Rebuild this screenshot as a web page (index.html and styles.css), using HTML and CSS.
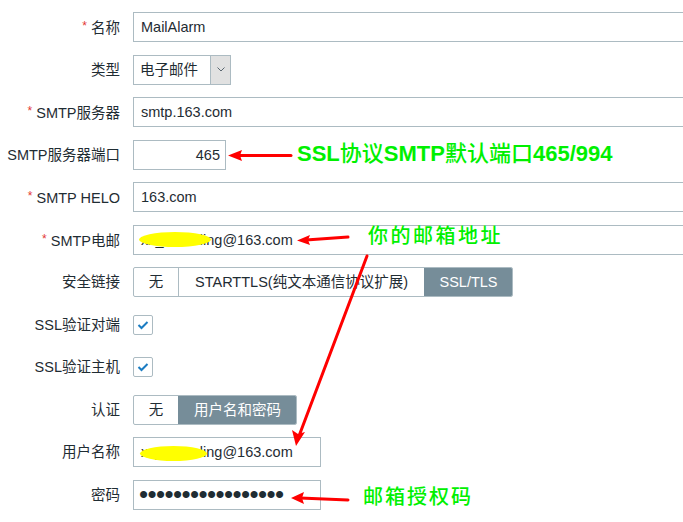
FILE: index.html
```html
<!DOCTYPE html>
<html lang="zh-CN">
<head>
<meta charset="utf-8">
<title>MailAlarm</title>
<link rel="stylesheet" href="styles.css">
</head>
<body>
<div class="page">
  <div class="form">
    <div class="row">
      <div class="label"><span class="req">*</span>名称</div>
      <div class="input wide">MailAlarm</div>
    </div>
    <div class="row">
      <div class="label">类型</div>
      <div class="select">
        <span class="select-text">电子邮件</span>
        <span class="select-btn">
          <svg width="8" height="5" viewBox="0 0 8 5"><path d="M0.5 0.5 L4 4 L7.5 0.5" fill="none" stroke="#5a6670" stroke-width="1"/></svg>
        </span>
      </div>
    </div>
    <div class="row">
      <div class="label"><span class="req">*</span>SMTP服务器</div>
      <div class="input wide">smtp.163.com</div>
    </div>
    <div class="row">
      <div class="label">SMTP服务器端口</div>
      <div class="input port">465</div>
    </div>
    <div class="row">
      <div class="label"><span class="req">*</span>SMTP HELO</div>
      <div class="input wide">163.com</div>
    </div>
    <div class="row">
      <div class="label"><span class="req">*</span>SMTP电邮</div>
      <div class="input wide masked">xx_xxxxxling@163.com<span class="blob blob-email"></span></div>
    </div>
    <div class="row">
      <div class="label">安全链接</div>
      <div class="seg">
        <span class="seg-item s-none">无</span>
        <span class="seg-item s-starttls">STARTTLS(纯文本通信协议扩展)</span>
        <span class="seg-item s-ssl on">SSL/TLS</span>
      </div>
    </div>
    <div class="row">
      <div class="label">SSL验证对端</div>
      <div class="check"><svg width="18" height="18" viewBox="0 0 18 18"><path d="M4.5 9 L7.5 12 L13.5 6" fill="none" stroke="#1b7cc2" stroke-width="2"/></svg></div>
    </div>
    <div class="row">
      <div class="label">SSL验证主机</div>
      <div class="check"><svg width="18" height="18" viewBox="0 0 18 18"><path d="M4.5 9 L7.5 12 L13.5 6" fill="none" stroke="#1b7cc2" stroke-width="2"/></svg></div>
    </div>
    <div class="row">
      <div class="label">认证</div>
      <div class="seg">
        <span class="seg-item a-none">无</span>
        <span class="seg-item a-user on">用户名和密码</span>
      </div>
    </div>
    <div class="row">
      <div class="label">用户名称</div>
      <div class="input short masked">xx_xxxxxling@163.com<span class="blob blob-user"></span></div>
    </div>
    <div class="row">
      <div class="label">密码</div>
      <div class="input short"><span class="dots">•••••••••••••••••</span></div>
    </div>
  </div>

  <svg class="arrows" width="683" height="522" viewBox="0 0 683 522">
    <g fill="none" stroke="#ff0000" stroke-width="3" stroke-linecap="round">
      <path d="M291 155.5 L238 155.5"/>
      <path d="M348 237 L306 240"/>
      <path d="M367 256 L299 436"/>
      <path d="M348 500 L300 498"/>
    </g>
    <g fill="#ff0000">
      <polygon points="228,155.5 242,150 240,155.5 242,161"/>
      <polygon points="297,240.5 310,235 308,240 310,245"/>
      <polygon points="296,446 292,430 298,434 305,432"/>
      <polygon points="291,498 304,492 302,498 304,504"/>
    </g>
  </svg>
  <div class="note note-port">SSL<span class="cjk">协议</span>SMTP<span class="cjk">默认端口</span>465/994</div>
  <div class="note note-mail">你的邮箱地址</div>
  <div class="note note-auth">邮箱授权码</div>
</div>
</body>
</html>
```

FILE: styles.css
```css
html, body {
  margin: 0;
  padding: 0;
  background: #ffffff;
  overflow: hidden;
}

.page {
  position: relative;
  width: 683px;
  height: 522px;
  overflow: hidden;
  font-family: "Liberation Sans", "Noto Sans CJK SC", sans-serif;
  font-size: 14.5px;
  color: #1f2c33;
}

.form {
  display: flex;
  flex-direction: column;
  gap: 12.5px;
  padding-top: 12px;
}

.row {
  display: flex;
  align-items: center;
  height: 30px;
  gap: 13px;
}

.label {
  width: 120px;
  flex: none;
  text-align: right;
  white-space: nowrap;
  line-height: 30px;
}

.req {
  color: #e33734;
  font-size: 12px;
  vertical-align: 3px;
  margin-right: 4px;
}

.input {
  position: relative;
  box-sizing: border-box;
  height: 30px;
  border: 1px solid #acbbc2;
  background: #fff;
  padding: 0 7px;
  line-height: 28px;
  white-space: nowrap;
  flex: none;
}

.input.wide { width: 600px; }
.input.port { width: 93px; text-align: right; padding-right: 5px; }
.input.short { width: 188px; }

.blob {
  position: absolute;
  background: #ffff00;
  border-radius: 50%;
}
.blob-email { left: 5px; top: 6px; width: 72px; height: 15px; }
.blob-user { left: 6px; top: 8px; width: 67px; height: 15px; }

.dots {
  font-size: 26px;
  letter-spacing: -0.6px;
  margin-left: -2px;
  line-height: 28px;
  display: inline-block;
  vertical-align: top;
  transform: translateY(-1px);
}

.select {
  box-sizing: border-box;
  width: 98px;
  height: 30px;
  border: 1px solid #acbbc2;
  display: flex;
  align-items: stretch;
  flex: none;
}
.select-text {
  flex: 1;
  padding-left: 6px;
  line-height: 28px;
}
.select-btn {
  width: 19px;
  background: #e1e1e1;
  border-left: 1px solid #acbbc2;
  display: flex;
  align-items: center;
  justify-content: center;
}

.seg {
  display: flex;
  height: 30px;
  box-sizing: border-box;
  border: 1px solid #acbbc2;
  border-radius: 2px;
  overflow: hidden;
  flex: none;
}
.seg-item {
  line-height: 28px;
  text-align: center;
  white-space: nowrap;
  border-left: 1px solid #acbbc2;
  box-sizing: border-box;
}
.seg-item:first-child { border-left: none; }
.seg-item.on {
  background: #768d99;
  color: #ffffff;
  border-left-color: #768d99;
}
.s-none { width: 44px; }
.s-starttls { width: 246px; }
.s-ssl { width: 88px; }
.a-none { width: 44px; }
.a-user { width: 118px; }

.check {
  box-sizing: border-box;
  width: 20px;
  height: 20px;
  border: 1px solid #acbbc2;
  border-radius: 2px;
  display: flex;
  align-items: center;
  justify-content: center;
  flex: none;
}

.arrows {
  position: absolute;
  left: 0;
  top: 0;
  pointer-events: none;
}

.note {
  position: absolute;
  color: #00f000;
  white-space: nowrap;
  font-family: "Liberation Sans", "Noto Sans CJK SC", sans-serif;
}
.note-port {
  left: 297px;
  top: 141px;
  font-size: 22px;
  font-weight: bold;
  line-height: 26px;
}
.note-port .cjk {
  font-weight: 500;
}
.note-mail {
  left: 368px;
  top: 223px;
  font-size: 20px;
  font-weight: 500;
  letter-spacing: 2.5px;
  line-height: 26px;
}
.note-auth {
  left: 363px;
  top: 484px;
  font-size: 20px;
  font-weight: 500;
  letter-spacing: 2px;
  line-height: 26px;
}
```
